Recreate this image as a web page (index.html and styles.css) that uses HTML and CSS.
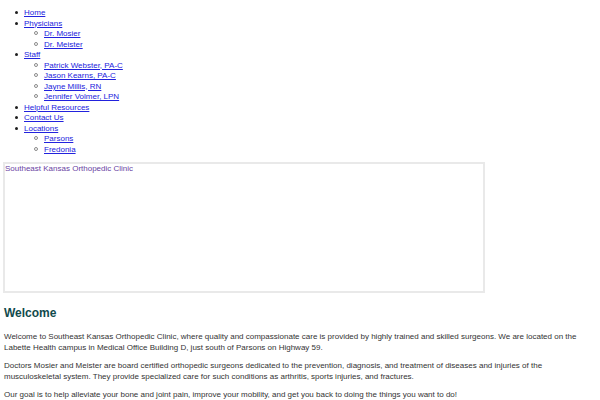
FILE: index.html
```html
<!DOCTYPE html>
<html>
<head>
<meta charset="utf-8">
<title>Southeast Kansas Orthopedic Clinic</title>
<link rel="stylesheet" href="styles.css">
</head>
<body>
<ul class="nav">
  <li><a href="#">Home</a></li>
  <li><a href="#">Physicians</a>
    <ul>
      <li><a href="#">Dr. Mosier</a></li>
      <li><a href="#">Dr. Meister</a></li>
    </ul>
  </li>
  <li><a href="#">Staff</a>
    <ul>
      <li><a href="#">Patrick Webster, PA-C</a></li>
      <li><a href="#">Jason Kearns, PA-C</a></li>
      <li><a href="#">Jayne Millis, RN</a></li>
      <li><a href="#">Jennifer Volmer, LPN</a></li>
    </ul>
  </li>
  <li><a href="#">Helpful Resources</a></li>
  <li><a href="#">Contact Us</a></li>
  <li><a href="#">Locations</a>
    <ul>
      <li><a href="#">Parsons</a></li>
      <li><a href="#">Fredonia</a></li>
    </ul>
  </li>
</ul>
<div class="banner"><span class="banner-alt">Southeast Kansas Orthopedic Clinic</span></div>
<div class="content">
  <h1 class="title">Welcome</h1>
  <p>Welcome to Southeast Kansas Orthopedic Clinic, where quality and compassionate care is provided by highly trained and skilled surgeons. We are located on the Labette Health campus in Medical Office Building D, just south of Parsons on Highway 59.</p>
  <p>Doctors Mosier and Meister are board certified orthopedic surgeons dedicated to the prevention, diagnosis, and treatment of diseases and injuries of the musculoskeletal system. They provide specialized care for such conditions as arthritis, sports injuries, and fractures.</p>
  <p>Our goal is to help alleviate your bone and joint pain, improve your mobility, and get you back to doing the things you want to do!</p>
</div>
</body>
</html>
```
FILE: styles.css
```css
html, body {
  margin: 0;
  padding: 0;
  background: #ffffff;
}
body {
  font-family: "Liberation Sans", Arial, sans-serif;
  font-size: 8px;
  line-height: 10.5px;
  color: #333333;
  padding: 0 4px;
}
.nav {
  margin: 8px 0 0 0;
  padding: 0 0 0 20px;
  list-style: none;
}
.nav ul {
  margin: 0;
  padding: 0 0 0 20px;
  list-style: none;
}
.nav li::before {
  content: "";
  display: inline-block;
  box-sizing: border-box;
  width: 3px;
  height: 3px;
  border-radius: 50%;
  background: #1e1e1e;
  margin-left: -9px;
  margin-right: 6px;
  vertical-align: 1px;
}
.nav ul li::before {
  width: 4px;
  height: 4px;
  margin-left: -10px;
  background: transparent;
  border: 1px solid #8a8a8a;
}
.nav a {
  color: #2222dd;
  text-decoration: underline;
}
.banner {
  margin: 7px 0 0 -1px;
  width: 478px;
  height: 127px;
  border: 2px solid #e9e9e9;
}
.banner-alt {
  display: block;
  color: #6a3fa3;
}
.content {
  margin-top: 12px;
}
.title {
  font-size: 12px;
  line-height: 16px;
  font-weight: bold;
  color: #124a4c;
  margin: 0 0 11px 0;
}
p {
  margin: 0 0 8px 0;
}
```
